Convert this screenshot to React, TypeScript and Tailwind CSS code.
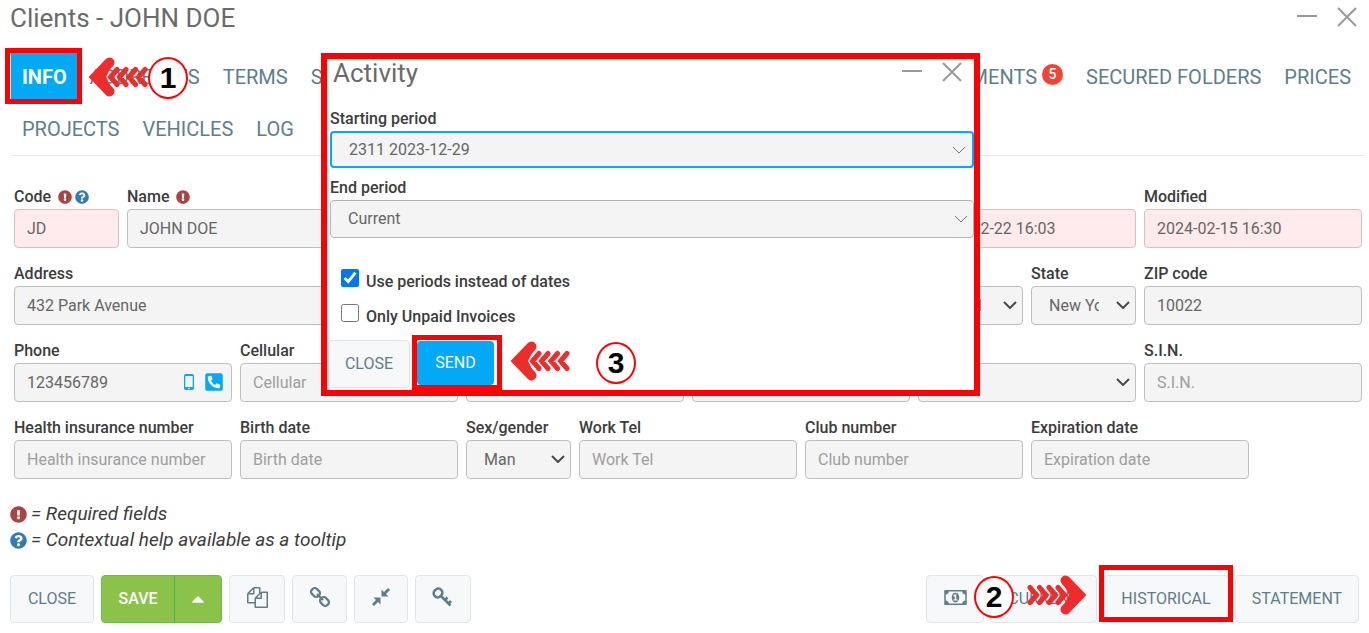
import React from "react";
import { FaExclamationCircle, FaQuestionCircle, FaPhoneSquareAlt, FaCaretUp } from "react-icons/fa";

type FieldProps = {
  id: string;
  label: string;
  span: string;
  value?: string;
  placeholder?: string;
  pink?: boolean;
  required?: boolean;
  help?: boolean;
  children?: React.ReactNode;
};

const boxBase = "h-[39px] w-full rounded-[4px] border text-base text-[#666] outline-none placeholder:text-[#9e9e9e]";

function FieldLabel({ id, label, required, help }: { id: string; label: string; required?: boolean; help?: boolean }) {
  return (
    <div className="mb-0.5 flex h-5 items-center text-[#3c3c3c]">
      <label htmlFor={id} className="whitespace-pre font-medium leading-5">{label || " "}</label>
      {required && <FaExclamationCircle className="ml-[7px] size-[14px] text-[#a94442]" />}
      {help && <FaQuestionCircle className="ml-[3px] size-[14px] text-[#337ab7]" />}
    </div>
  );
}

function Field({ id, label, span, value, placeholder, pink, required, help, children }: FieldProps) {
  return (
    <div className={span}>
      <FieldLabel id={id} label={label} required={required} help={help} />
      <div className="relative">
        <input
          id={id}
          defaultValue={value}
          placeholder={placeholder}
          className={`${boxBase} px-3 ${pink ? "border-[#d6c1c1] bg-[#ffebeb]" : "border-[#bfbfbf] bg-[#f4f4f4]"}`}
        />
        {children}
      </div>
    </div>
  );
}

function Chevron({ className }: { className: string }) {
  return (
    <svg viewBox="0 0 14 8" fill="none" stroke="currentColor" className={className}>
      <path d="M1 1l6 6 6-6" />
    </svg>
  );
}

function SelectField({ id, label, span, value }: { id: string; label: string; span: string; value: string }) {
  return (
    <div className={span}>
      <FieldLabel id={id} label={label} />
      <div className="relative">
        <select id={id} className={`${boxBase} appearance-none border-[#bfbfbf] bg-[#f4f4f4] pl-[17px] pr-9`}>
          <option>{value}</option>
        </select>
        <Chevron className="pointer-events-none absolute right-[6px] top-[15px] h-2 w-[14px] stroke-2 text-[#4a4a4a]" />
      </div>
    </div>
  );
}

function WindowControls() {
  return (
    <div className="flex text-[#999]">
      <button aria-label="Minimize" className="size-10">
        <svg viewBox="0 0 40 40" stroke="currentColor" strokeWidth="2" fill="none">
          <path d="M10 19h20" />
        </svg>
      </button>
      <button aria-label="Close window" className="size-10">
        <svg viewBox="0 0 40 40" stroke="currentColor" strokeWidth="2" fill="none">
          <path d="M11 11l18 18M29 11L11 29" />
        </svg>
      </button>
    </div>
  );
}

function Tab({ children, active }: { children: React.ReactNode; active?: boolean }) {
  return (
    <a
      href="#"
      className={`flex h-[52px] items-center whitespace-nowrap px-[11px] text-xl ${
        active ? "bg-[#03a9f4] font-bold text-white" : "text-[#607d8b]"
      }`}
    >
      {children}
    </a>
  );
}

function ToolButton({ label, className, children }: { label?: string; className: string; children: React.ReactNode }) {
  return (
    <button
      aria-label={label}
      className={`flex h-12 items-center justify-center rounded-[4px] border border-[#e0e5e8] bg-[#f6f8fa] text-base text-[#607d8b] ${className}`}
    >
      {children}
    </button>
  );
}

function Arrow({ className }: { className: string }) {
  return (
    <svg viewBox="0 0 60 40" className={className} fill="none" stroke="#ee2c2c" strokeLinecap="round">
      <path d="M24 8L18 20l6 12L8 22V18z" fill="#ee2c2c" stroke="none" />
      <path d="M21.500 5.500L7.500 20l14 14.500" strokeWidth="10" strokeLinejoin="miter" />
      <path d="M29 12.500L22.500 20l6.500 7.500M38 12.500L31.500 20l6.500 7.500M47.500 12.500L41 20l6.500 7.500M57 12.500L50.500 20l6.500 7.500" strokeWidth="5" />
    </svg>
  );
}

function Step({ n, className }: { n: number; className: string }) {
  return (
    <span
      className={`absolute flex h-[42px] w-10 items-center justify-center rounded-[50%] border-2 border-[#f00] bg-white text-[30px] font-bold leading-none text-black font-['Liberation_Sans',sans-serif] ${className}`}
    >
      {n}
    </span>
  );
}

function ActivityDialog() {
  return (
    <section
      role="dialog"
      aria-label="Activity"
      className="absolute left-[321px] top-[53px] w-[659px] border-[6px] border-[#f00] bg-white pl-[3px]"
    >
      <header className="flex h-[50px] items-start justify-between pl-[3px] pr-[2px]">
        <h2 className="text-[26px] leading-7 text-[#6b6b6b]">Activity</h2>
        <div className="-mt-[7px]">
          <WindowControls />
        </div>
      </header>
      <label htmlFor="start" className="block h-[22px] font-medium leading-5 text-[#3c3c3c]">Starting period</label>
      <div className="relative">
        <select
          id="start"
          className="block h-[37px] w-full appearance-none rounded-[4px] border-2 border-[#03a9f4] bg-[#f4f4f4] px-[17px] text-base text-[#666] outline-none"
        >
          <option>2311 2023-12-29</option>
        </select>
        <Chevron className="pointer-events-none absolute right-2 top-[15px] h-2 w-[14px] text-[#777]" />
      </div>
      <label htmlFor="end" className="mt-[10px] block h-[22px] font-medium leading-5 text-[#3c3c3c]">End period</label>
      <div className="relative">
        <select
          id="end"
          className="block h-[38px] w-full appearance-none rounded-[4px] border border-[#b4b4b4] bg-[#f4f4f4] px-[17px] text-base text-[#666] outline-none"
        >
          <option>Current</option>
        </select>
        <Chevron className="pointer-events-none absolute right-[6px] top-[15px] h-2 w-[14px] text-[#777]" />
      </div>
      <div className="mt-6 flex flex-col pl-[11px] font-medium text-[#3c3c3c]">
        <label className="flex h-[35px] items-center gap-[7px]">
          <input type="checkbox" defaultChecked className="mb-1 size-[18px] accent-[#0075ff]" />
          <span className="pt-1">Use periods instead of dates</span>
        </label>
        <label className="flex h-[35px] items-center gap-[7px]">
          <input type="checkbox" className="mb-1 size-[18px]" />
          <span className="pt-1">Only Unpaid Invoices</span>
        </label>
      </div>
      <footer className="-ml-[2px] mt-2 flex">
        <ToolButton className="w-[82px]">CLOSE</ToolButton>
        <button className="-mt-[5px] ml-[2px] flex h-[55px] w-[90px] border-[5px] border-[#f00] pt-px">
          <span className="flex h-full w-[77px] items-center justify-center rounded-[4px] bg-[#03a9f4] text-base text-white">SEND</span>
        </button>
        <Arrow className="ml-2 mt-px h-10 w-[60px]" />
        <span className="relative">
          <Step n={3} className="left-[26px] top-[2px]" />
        </span>
      </footer>
    </section>
  );
}

export default function App() {
  return (
    <main className="relative min-h-screen overflow-hidden bg-white font-[Roboto,sans-serif] text-base">
      <header className="flex h-[51px] items-start justify-between pl-[10px] pr-[2px]">
        <h1 className="pt-[3px] text-[26px] leading-[30px] text-[#6b6b6b]">Clients - JOHN DOE</h1>
        <div className="-mt-[3px]">
          <WindowControls />
        </div>
      </header>

      <nav className="ml-[11px] mr-1 border-b border-[#e8e8e8]">
        <div className="flex gap-px pr-[3px]">
          <Tab active>INFO</Tab>
          <Tab>ADDRESSES</Tab>
          <Tab>TERMS</Tab>
          <Tab>S</Tab>
          <span className="flex-1" />
          <Tab>
            DOCUMENTS
            <span className="mb-[6px] ml-[5px] flex size-[21px] items-center justify-center rounded-full bg-[#f44336] text-sm font-medium text-white">5</span>
          </Tab>
          <Tab>SECURED FOLDERS</Tab>
          <Tab>PRICES</Tab>
        </div>
        <div className="flex gap-px">
          <Tab>PROJECTS</Tab>
          <Tab>VEHICLES</Tab>
          <Tab>LOG</Tab>
        </div>
      </nav>

      <form className="ml-[14px] mr-[7px] mt-[31px] grid grid-cols-12 gap-x-2 gap-y-4">
        <Field id="code" label="Code" span="col-span-1" value="JD" pink required help />
        <Field id="name" label="Name" span="col-span-7" value="JOHN DOE" required />
        <Field id="created" label="" span="col-span-2" value="2023-12-22 16:03" pink />
        <Field id="modified" label="Modified" span="col-span-2" value="2024-02-15 16:30" pink />

        <Field id="address" label="Address" span="col-span-8" value="432 Park Avenue" />
        <SelectField id="country" label="" span="col-span-1" value="United" />
        <SelectField id="state" label="State" span="col-span-1" value="New York" />
        <Field id="zip" label="ZIP code" span="col-span-2" value="10022" />

        <Field id="phone" label="Phone" span="col-span-2" value="123456789">
          <svg viewBox="0 0 10 16" className="absolute right-[38px] top-[11px] h-4 w-[10px]">
            <rect width="10" height="16" rx="1.800" fill="#03a9f4" />
            <rect x="1.300" y="2" width="7.400" height="11" fill="#f4f4f4" />
            <circle cx="5" cy="14.500" r="0.800" fill="#f4f4f4" />
          </svg>
          <FaPhoneSquareAlt className="absolute right-2 top-[9px] size-5 text-[#03a9f4]" />
        </Field>
        <Field id="cellular" label="Cellular" span="col-span-2" placeholder="Cellular" />
        <Field id="extra-a" label="" span="col-span-2" />
        <Field id="extra-b" label="" span="col-span-2" />
        <SelectField id="extra-c" label="" span="col-span-2" value="" />
        <Field id="sin" label="S.I.N." span="col-span-2" placeholder="S.I.N." />

        <Field id="health" label="Health insurance number" span="col-span-2" placeholder="Health insurance number" />
        <Field id="birth" label="Birth date" span="col-span-2" placeholder="Birth date" />
        <SelectField id="sex" label="Sex/gender" span="col-span-1" value="Man" />
        <Field id="work" label="Work Tel" span="col-span-2" placeholder="Work Tel" />
        <Field id="club" label="Club number" span="col-span-2" placeholder="Club number" />
        <Field id="expiration" label="Expiration date" span="col-span-2" placeholder="Expiration date" />
      </form>

      <div className="ml-[10px] mt-[22px] text-[19px] italic leading-[26px] text-[#3c3c3c]">
        <p className="flex items-center gap-1">
          <FaExclamationCircle className="size-[17px] text-[#a94442]" />= Required fields
        </p>
        <p className="flex items-center gap-1">
          <FaQuestionCircle className="size-[17px] text-[#337ab7]" />= Contextual help available as a tooltip
        </p>
      </div>

      <footer className="ml-[10px] mr-[10px] mt-[22px] flex justify-between">
        <div className="flex gap-[7px]">
          <ToolButton className="w-[84px]">CLOSE</ToolButton>
          <div className="flex h-12 w-[121px] overflow-hidden rounded-[4px] border border-[#6abf4b] bg-[#8bc34a] text-white">
            <button className="w-[73px] border-r border-[#4caf50] font-medium">SAVE</button>
            <button aria-label="More save options" className="flex flex-1 items-center justify-center">
              <FaCaretUp className="size-5" />
            </button>
          </div>
          <ToolButton label="Copy" className="w-14">
            <svg viewBox="0 0 1792 1792" fill="currentColor" className="mb-1 size-[21px]">
              <path d="M1696 384q40 0 68 28t28 68v1216q0 40-28 68t-68 28h-960q-40 0-68-28t-28-68v-288h-544q-40 0-68-28t-28-68v-672q0-40 20-88t48-76l408-408q28-28 76-48t88-20h416q40 0 68 28t28 68v328q68-40 128-40h416zm-544 213l-299 299h299v-299zm-640-384l-299 299h299v-299zm196 647l316-316v-416h-384v416q0 40-28 68t-68 28h-416v640h512v-256q0-40 20-88t48-76zm956 804v-1152h-384v416q0 40-28 68t-68 28h-416v640h896z" />
            </svg>
          </ToolButton>
          <ToolButton label="Link" className="w-[55px]">
            <svg viewBox="0 0 20 20" fill="none" stroke="currentColor" strokeWidth="2.300" className="mb-1 size-5">
              <rect x="1" y="2" width="9" height="7" rx="3" transform="rotate(45 5.500 5.500)" />
              <rect x="10" y="11" width="9" height="7" rx="3" transform="rotate(45 14.500 14.500)" />
              <path d="M7 7l6 6" />
            </svg>
          </ToolButton>
          <ToolButton label="Collapse" className="w-[54px]">
            <svg viewBox="0 0 18 18" fill="currentColor" className="mb-1 size-[18px]">
              <path d="M9.500 1.500V8.500H16.500L14 6 18 2 16 0 12 4zM8.500 16.500V9.500H1.500L4 12 0 16 2 18 6 14z" />
            </svg>
          </ToolButton>
          <ToolButton label="Key" className="w-14">
            <svg viewBox="0 0 20 20" fill="none" stroke="currentColor" strokeWidth="2.600" className="mb-1 mr-[2px] size-5">
              <rect x="1.500" y="2" width="9" height="8" rx="4" transform="rotate(-45 6 6)" />
              <path d="M9 9l9.500 9.500M13 13l2.500-2.500M16.500 16.500l2.500-2.500" />
            </svg>
          </ToolButton>
        </div>
        <div className="flex gap-[6px]">
          <ToolButton label="Payment" className="w-[58px]">
            <svg viewBox="0 0 1920 1792" fill="currentColor" className="mb-1 h-[21px] w-[23px]">
              <path d="M768 1152h384v-96h-128v-448h-114l-148 137 77 80q42-37 55-57h2v288h-128v96zm512-256q0 70-21 142t-59.500 134-101.500 101-138 39-138-39-101.500-101-59.500-134-21-142 21-142 59.500-134 101.500-101 138-39 138 39 101.500 101 59.500 134 21 142zm512 256v-512q-106 0-181-75t-75-181h-1152q0 106-75 181t-181 75v512q106 0 181 75t75 181h1152q0-106 75-181t181-75zm128-832v1152q0 26-19 45t-45 19h-1792q-26 0-45-19t-19-45v-1152q0-26 19-45t45-19h1792q26 0 45 19t19 45z" />
            </svg>
          </ToolButton>
          <ToolButton className="w-[107px]">CURRENT</ToolButton>
          <ToolButton className="w-[126px]">HISTORICAL</ToolButton>
          <ToolButton className="w-[124px]">STATEMENT</ToolButton>
        </div>
      </footer>

      <span className="absolute left-[5px] top-12 h-14 w-[77px] border-[5px] border-[#f00]" />
      <Arrow className="absolute left-[88px] top-[57px] h-10 w-[60px]" />
      <Step n={1} className="left-[148px] top-[57px]" />

      <span className="absolute bottom-[11px] right-[136px] h-[57px] w-[134px] border-[5px] border-[#f00]" />
      <Arrow className="absolute bottom-[18px] right-[282px] h-10 w-[60px] rotate-180" />
      <Step n={2} className="bottom-[15px] right-[355px]" />

      <ActivityDialog />
    </main>
  );
}
